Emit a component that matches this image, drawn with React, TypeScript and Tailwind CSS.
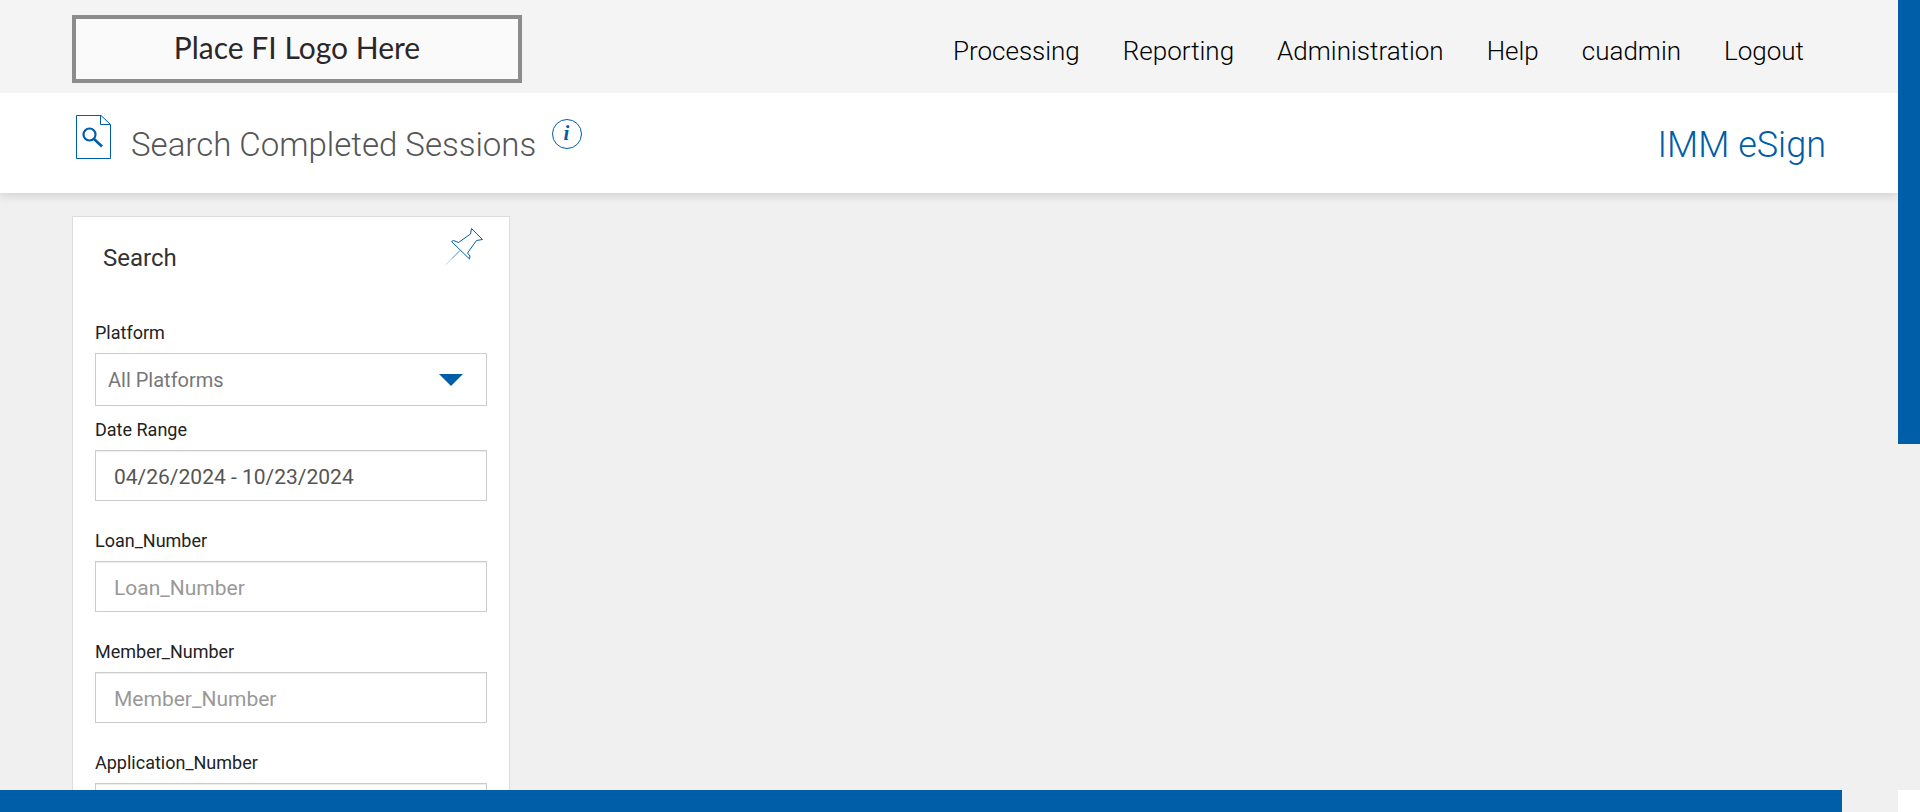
import React, { useState } from 'react';

const navItems = ['Processing', 'Reporting', 'Administration', 'Help', 'cuadmin', 'Logout'];

const textFields = ['Loan_Number', 'Member_Number', 'Application_Number'];

const labelClass = 'block text-lg leading-6 font-normal text-[#222222] mb-2';
const inputClass =
  'block w-full h-[51px] border border-[#cccccc] bg-white px-[18px] pt-0.5 text-[21px] text-[#555555] placeholder:text-[#999999] shadow-[inset_0_1px_1px_rgba(0,0,0,0.075)] outline-none';

function DocumentSearchIcon() {
  return (
    <svg width="36" height="46" viewBox="0 0 36 46" fill="none" stroke="#005da8" aria-hidden="true">
      <path d="M1.5 1.5H26L35.5 10.5V44.5H1.5Z" />
      <path d="M25.5 1.5V10.5H35.5" />
      <circle cx="14.5" cy="20.5" r="6" strokeWidth="2.2" />
      <path d="M19 25L27 32.5" strokeWidth="2.6" />
    </svg>
  );
}

function InfoIcon() {
  return (
    <svg width="32" height="32" viewBox="0 0 32 32" aria-hidden="true">
      <circle cx="16" cy="16" r="14.5" fill="none" stroke="#005da8" />
      <text
        x="15.5"
        y="22"
        textAnchor="middle"
        fill="#005da8"
        fontFamily="'Liberation Serif', serif"
        fontSize="21"
        fontStyle="italic"
        fontWeight="700"
      >
        i
      </text>
    </svg>
  );
}

function PinIcon() {
  return (
    <svg width="40" height="40" viewBox="0 0 40 40" fill="none" stroke="#005da8" aria-hidden="true">
      <path d="M27.5 1.5L38.5 12.5L32.5 13.5L23.5 26L26 29L25.5 32L7.5 14.5L9.5 13.5L14.5 15.5L26.5 7Z" />
      <path d="M16 23.5L8 31.5" strokeOpacity="0.7" />
      <path d="M8 31.5L2 37.5" strokeOpacity="0.3" />
    </svg>
  );
}

function Header() {
  return (
    <header className="relative z-10 h-[93px] shrink-0 bg-[#f4f4f4] flex items-start justify-between pl-[72px] pr-[94px]">
      <div className="mt-[15px] w-[450px] h-[68px] border-4 border-[#8c8c8c] bg-[#fafafa] flex items-center justify-center">
        <span className="pb-1 font-['Lato',sans-serif] text-[30px] leading-9 text-[#2b2728]">
          Place FI Logo Here
        </span>
      </div>
      <nav className="mt-[33px] flex gap-[43px]">
        {navItems.map((item) => (
          <a key={item} href="#" className="text-[26px] leading-9 font-light text-black">
            {item}
          </a>
        ))}
      </nav>
    </header>
  );
}

function TitleBar() {
  return (
    <div className="relative h-[100px] shrink-0 bg-white shadow-[0_2px_10px_rgba(0,0,0,0.15)] flex items-start justify-between pl-[75px] pr-[72px]">
      <div className="flex items-start pt-[21px]">
        <DocumentSearchIcon />
        <h1 className="mt-[9px] ml-5 text-[33px] leading-[44px] font-light text-[#555555]">
          Search Completed Sessions
        </h1>
        <button type="button" aria-label="Information" className="mt-1 ml-[15px]">
          <InfoIcon />
        </button>
      </div>
      <div className="mt-[30px] text-[36px] leading-[44px] font-light text-[#005da8]">
        IMM eSign
      </div>
    </div>
  );
}

function SearchPanel() {
  const [dateRange, setDateRange] = useState('04/26/2024 - 10/23/2024');

  return (
    <form className="w-[438px] border border-[#dddddd] bg-white px-[22px] pb-7">
      <div className="flex items-start justify-between h-[104px] pl-2 pr-[3px]">
        <h2 className="mt-[23px] text-2xl leading-9 text-[#333333]">Search</h2>
        <button type="button" aria-label="Pin search panel" className="mt-2.5">
          <PinIcon />
        </button>
      </div>

      <label htmlFor="platform" className={labelClass}>
        Platform
      </label>
      <div className="grid items-center mb-3">
        <select
          id="platform"
          className="col-start-1 row-start-1 w-full h-[53px] appearance-none border border-[#cccccc] bg-white px-3 text-xl text-[#777777] outline-none"
        >
          <option>All Platforms</option>
        </select>
        <svg
          className="col-start-1 row-start-1 justify-self-end mr-6 pointer-events-none"
          width="24"
          height="12"
          viewBox="0 0 24 12"
          aria-hidden="true"
        >
          <path d="M0 0H24L12 12Z" fill="#005da8" />
        </svg>
      </div>

      <div className="flex flex-col gap-7">
        <div>
          <label htmlFor="date-range" className={labelClass}>
            Date Range
          </label>
          <input
            id="date-range"
            type="text"
            className={inputClass}
            value={dateRange}
            onChange={(e) => setDateRange(e.target.value)}
          />
        </div>
        {textFields.map((name) => (
          <div key={name}>
            <label htmlFor={name} className={labelClass}>
              {name}
            </label>
            <input id={name} type="text" className={inputClass} placeholder={name} />
          </div>
        ))}
      </div>
    </form>
  );
}

function App() {
  return (
    <div className="h-screen flex flex-col overflow-hidden bg-[#f0f0f0] font-['Roboto',sans-serif]">
      <div className="flex flex-1 min-h-0">
        <div className="flex flex-col flex-1 min-w-0 overflow-hidden">
          <Header />
          <TitleBar />
          <main className="flex-1 min-h-0 pl-[72px] pt-[23px]">
            <SearchPanel />
          </main>
        </div>
        {/* vertical scroll track */}
        <div className="w-[22px] bg-[#f0f0f0]">
          <div className="h-[56.2%] bg-[#005da8]" />
        </div>
      </div>
      {/* horizontal scroll track */}
      <div className="h-[22px] shrink-0 flex">
        <div className="flex-1 bg-[#f0f0f0]">
          <div className="w-[97.05%] h-full bg-[#005da8]" />
        </div>
        <div className="w-[22px] bg-white" />
      </div>
    </div>
  );
}

export default App;
